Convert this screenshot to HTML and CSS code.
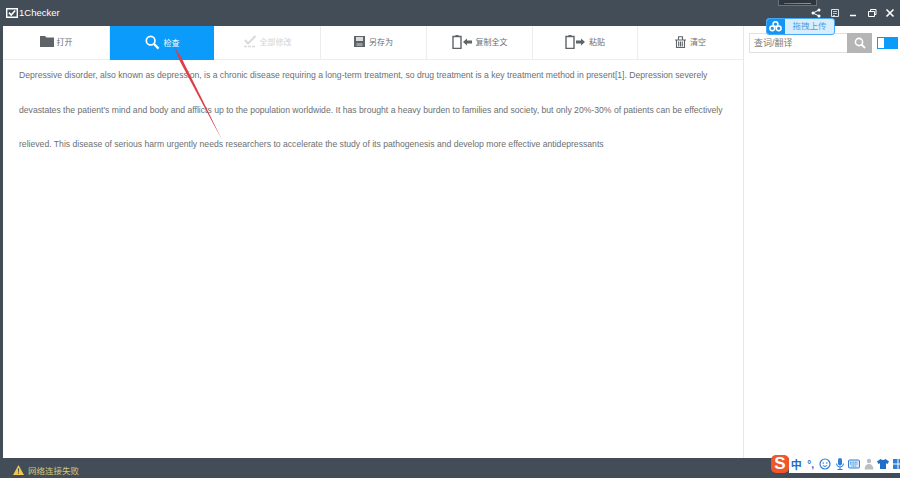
FILE: index.html
```html
<!DOCTYPE html>
<html lang="zh">
<head>
<meta charset="utf-8">
<title>1Checker</title>
<link rel="stylesheet" href="styles.css">
</head>
<body>
<div class="app">
  <header class="titlebar">
    <div class="brand">
      <svg class="brand-icon" viewBox="0 0 12 10"><path d="M.7.7h10.600v8.600H.7z" fill="none" stroke="#fff" stroke-width="1.400"/><path d="M3 4.600l2.200 2.400L9.200 2.400" fill="none" stroke="#fff" stroke-width="1.600"/></svg>
      <span>1Checker</span>
    </div>
    <div class="winbtns">
      <svg class="winbtn" viewBox="0 0 10 10"><circle cx="8" cy="2" r="1.500" fill="#fff"/><circle cx="2" cy="5" r="1.500" fill="#fff"/><circle cx="8" cy="8" r="1.500" fill="#fff"/><path d="M8 2L2 5l6 3" fill="none" stroke="#fff"/></svg>
      <svg class="winbtn" viewBox="0 0 10 10"><path d="M1.500 1.500h7v7h-7z" fill="none" stroke="#dfe2e5"/><path d="M3 3.500h4M3 5.500h4M3 7.500h2" stroke="#dfe2e5" stroke-width=".8"/></svg>
      <svg class="winbtn" viewBox="0 0 10 10"><path d="M2 7.500h6" stroke="#fff" stroke-width="1.500"/></svg>
      <svg class="winbtn" viewBox="0 0 10 10"><path d="M1.500 3.500h6v5h-6zM3.500 3.500v-2h5.500v5h-1.500" fill="none" stroke="#fff"/></svg>
      <svg class="winbtn" viewBox="0 0 10 10"><path d="M1.500 1.500l7 7M8.500 1.500l-7 7" stroke="#fff" stroke-width="1.600"/></svg>
    </div>
  </header>
  <div class="body">
    <main class="editor">
      <nav class="toolbar">
        <div class="tool">
          <svg class="ico ico-folder" viewBox="0 0 14 11"><path d="M0 0h5l1.500 1.500H14V11H0z" fill="#5f6469"/></svg>
          <span>打开</span>
        </div>
        <div class="tool tool-active">
          <svg class="ico ico-search" viewBox="0 0 16 16"><circle cx="6" cy="6" r="4.600" fill="none" stroke="#fff" stroke-width="1.800"/><path d="M9.500 9.500l5 5" stroke="#fff" stroke-width="2.400"/></svg>
          <span>检查</span>
        </div>
        <div class="tool tool-disabled">
          <svg class="ico ico-fix" viewBox="0 0 14 13"><path d="M2 5l3 3.500L12.500 1" fill="none" stroke="#d9dadb" stroke-width="2"/><path d="M1 11.500h12" stroke="#d9dadb" stroke-width="1.600" stroke-dasharray="3 1"/></svg>
          <span>全部修改</span>
        </div>
        <div class="tool">
          <svg class="ico ico-save" viewBox="0 0 11 11"><path d="M0 0h11v11H0z" fill="#5f6469"/><path d="M2 1h7v4H2z" fill="#d8dadb"/><path d="M2.500 7h6v3h-6z" fill="#9a9ea1"/></svg>
          <span>另存为</span>
        </div>
        <div class="tool">
          <svg class="ico ico-clip" viewBox="0 0 21 15"><path d="M1 2.500h8v12H1z" fill="#fff" stroke="#5f6469" stroke-width="1.400"/><path d="M3.500 1h3v2h-3z" fill="#5f6469"/><path d="M11 8l4-3.500V6.500h5v3h-5v2z" fill="#5f6469"/></svg>
          <span>复制全文</span>
        </div>
        <div class="tool">
          <svg class="ico ico-clip" viewBox="0 0 21 15"><path d="M1 2.500h8v12H1z" fill="#fff" stroke="#5f6469" stroke-width="1.400"/><path d="M3.500 1h3v2h-3z" fill="#5f6469"/><path d="M20 8l-4-3.500V6.500h-5v3h5v2z" fill="#5f6469"/></svg>
          <span>粘贴</span>
        </div>
        <div class="tool">
          <svg class="ico ico-trash" viewBox="0 0 11 12"><path d="M0 4h11M1.500 4v7.500h8V4M3.700 5.500v5M5.500 5.500v5M7.300 5.500v5M3.500 3.500V.7h4v2.800" fill="none" stroke="#5f6469" stroke-width="1.100"/></svg>
          <span>清空</span>
        </div>
      </nav>
      <div class="doc">
        <p class="doc-line">Depressive disorder, also known as depression, is a chronic disease requiring a long-term treatment, so drug treatment is a key treatment method in present[1]. Depression severely</p>
        <p class="doc-line">devastates the patient's mind and body and afflicts up to the population worldwide. It has brought a heavy burden to families and society, but only 20%-30% of patients can be effectively</p>
        <p class="doc-line">relieved. This disease of serious harm urgently needs researchers to accelerate the study of its pathogenesis and develop more effective antidepressants</p>
      </div>
    </main>
    <aside class="side">
      <div class="side-top">
        <div class="searchbox">
          <span class="search-text">查词/翻译</span>
          <span class="search-btn">
            <svg class="search-btn-ico" viewBox="0 0 12 12"><circle cx="5" cy="5" r="3.600" fill="none" stroke="#fff" stroke-width="1.600"/><path d="M7.500 7.500l3.500 3.500" stroke="#fff" stroke-width="2"/></svg>
          </span>
        </div>
        <div class="toggle"><span class="toggle-knob"></span></div>
      </div>
    </aside>
  </div>
  <footer class="statusbar">
    <svg class="warn" viewBox="0 0 12 11"><path d="M6 0l6 11H0z" fill="#f2c94c"/><path d="M6 3.500v4M6 8.300v1.300" stroke="#4a4f50" stroke-width="1.200"/></svg>
    <span class="status-text">网络连接失败</span>
  </footer>
</div>

<div class="thumb"><span class="thumb-line"></span></div>

<div class="upload">
  <span class="upload-ico">
    <svg viewBox="0 0 14 12" class="upload-cloud"><circle cx="7" cy="3.500" r="2.600" fill="none" stroke="#fff" stroke-width="1.700"/><circle cx="3.500" cy="8" r="2.600" fill="none" stroke="#fff" stroke-width="1.700"/><circle cx="10.500" cy="8" r="2.600" fill="none" stroke="#fff" stroke-width="1.700"/></svg>
  </span>
  <span class="upload-text">拖拽上传</span>
</div>

<svg class="arrow" viewBox="0 0 60 100"><path d="M3 3L11 15.500 13 20 31 56 51 97 29 56 8.800 18z" fill="#dc3f4a"/></svg>

<div class="ime">
  <span class="ime-s">S</span>
  <div class="ime-items">
    <span class="ime-cell ime-zh">中</span>
    <span class="ime-cell ime-punct">°,</span>
    <span class="ime-cell"><svg class="ime-ico" viewBox="0 0 12 12"><circle cx="6" cy="6" r="5" fill="none" stroke="#2f7fd6" stroke-width="1.200"/><circle cx="4.200" cy="5" r=".8" fill="#2f7fd6"/><circle cx="7.800" cy="5" r=".8" fill="#2f7fd6"/><path d="M3.800 7.500q2.200 2 4.400 0" fill="none" stroke="#2f7fd6"/></svg></span>
    <span class="ime-cell"><svg class="ime-ico" viewBox="0 0 12 12"><rect x="4" y="0" width="4" height="7.500" rx="2" fill="#2f7fd6"/><path d="M2.500 5.500q0 3.500 3.500 3.500t3.500-3.500M6 9v2.500M3.500 11.500h5" fill="none" stroke="#2f7fd6"/></svg></span>
    <span class="ime-cell"><svg class="ime-ico" viewBox="0 0 12 12"><rect x=".5" y="2" width="11" height="8" rx="1" fill="#dcebf9" stroke="#2f7fd6"/><path d="M2 4.200h8M2 6h8M3.500 8h5" stroke="#2f7fd6" stroke-dasharray="1 .6"/></svg></span>
    <span class="ime-cell"><svg class="ime-ico" viewBox="0 0 12 12"><circle cx="6" cy="3" r="2.200" fill="#b9bec2"/><path d="M1.500 11.500q.5-5.500 4.500-5.500t4.500 5.500z" fill="#b9bec2"/></svg></span>
    <span class="ime-cell"><svg class="ime-ico" viewBox="0 0 12 12"><path d="M3.500 1L0 3.500 1.500 6l1.500-.8V11h6V5.200l1.500.8L12 3.500 8.500 1q-2.500 2-5 0z" fill="#1f6fc4"/></svg></span>
    <span class="ime-cell"><svg class="ime-ico" viewBox="0 0 12 12"><path d="M1 1h4.500v4.500H1zM6.500 1H11v4.500H6.500zM1 6.500h4.500V11H1zM6.500 6.500H11V11H6.500z" fill="#2f7fd6"/></svg></span>
  </div>
</div>
</body>
</html>
```
FILE: styles.css
```css
* { box-sizing: border-box; }
html, body { margin: 0; padding: 0; height: 100%; overflow: hidden; }
body { font-family: "Liberation Sans", "Noto Sans CJK SC", sans-serif; background: #434d57; position: relative; }

.app { display: flex; flex-direction: column; width: 900px; height: 478px; background: #434d57; }

.titlebar { display: flex; align-items: center; justify-content: space-between; height: 26px; flex: none; padding-left: 6px; }
.brand { display: flex; align-items: center; gap: 1px; color: #fff; font-size: 9.500px; margin-top: -1px; }
.brand-icon { width: 12px; height: 10px; display: block; }
.winbtns { display: flex; align-items: center; gap: 8.500px; padding-right: 5px; margin-top: -1px; }
.winbtn { width: 10px; height: 10px; display: block; }

.body { display: flex; flex: 1; min-height: 0; margin-left: 3px; background: #fff; }
.editor { width: 741px; flex: none; display: flex; flex-direction: column; border-right: 1px solid #e6e8ea; }

.toolbar { display: grid; grid-template-columns: 107px 104px 107px 106px 106px 105px 1fr; height: 34px; flex: none; border-bottom: 1px solid #eceded; }
.tool { display: flex; align-items: center; justify-content: center; gap: 3px; padding-bottom: 2px; font-size: 8px; color: #6a6e72; border-right: 1px solid #eceded; }
.tool:last-child { border-right: 0; }
.tool-active { background: #0a9bfb; color: #fff; border-right: 0; margin-bottom: -1px; }
.tool-disabled { color: #d2d3d4; }
.ico { display: block; flex: none; }
.ico-folder { width: 14px; height: 11px; }
.ico-search { width: 15px; height: 15px; margin-right: 1px; }
.ico-fix { width: 14px; height: 13px; }
.ico-save { width: 11px; height: 11px; margin-right: 1px; }
.ico-clip { width: 21px; height: 15px; }
.ico-trash { width: 11px; height: 12px; margin-right: 1px; }

.doc { padding: 8px 16px 0; }
.doc-line { margin: 0; height: 34.500px; line-height: 14px; font-size: 8.630px; color: #6c6f72; white-space: nowrap; }

.side { flex: 1; min-width: 0; }
.side-top { display: flex; align-items: center; height: 34px; padding-left: 5px; gap: 5px; }
.searchbox { display: flex; width: 123px; height: 20px; border: 1px solid #e0e1e2; border-right: 0; background: #fff; align-items: stretch; }
.search-text { flex: 1; font-size: 9px; line-height: 18px; color: #7b7e81; padding-left: 4px; }
.search-btn { width: 25px; margin: -1px 0; background: #b5b5b5; display: flex; align-items: center; justify-content: center; }
.search-btn-ico { width: 12px; height: 12px; display: block; }
.toggle { width: 21px; height: 12px; border: 1px solid #0a9bfb; background: #fff; display: flex; justify-content: flex-end; }
.toggle-knob { width: 13px; background: #0a9bfb; }

.statusbar { height: 20px; flex: none; display: flex; align-items: center; padding-left: 13px; gap: 4px; padding-top: 3px; }
.warn { width: 11px; height: 10px; display: block; }
.status-text { font-size: 8.500px; color: #d9c677; }

.thumb { position: absolute; left: 778px; top: -2px; width: 39px; height: 8px; background: #2f363d; border: 1px solid #6a737b; display: flex; align-items: flex-end; padding: 0 5px 1px; }
.thumb-line { flex: 1; height: 1px; background: linear-gradient(90deg, #2f8a7a, #5ba25f, #9a9a60); }

.upload { position: absolute; left: 766px; top: 18px; display: flex; height: 17px; width: 69px; border-radius: 3px; overflow: hidden; border: 1px solid #46a8f6; background: #d9eefc; }
.upload-ico { width: 19px; background: #1295f5; display: flex; align-items: center; justify-content: center; margin: -1px 0 -1px -1px; }
.upload-cloud { width: 13px; height: 11px; display: block; }
.upload-text { flex: 1; text-align: center; font-size: 8.500px; line-height: 15px; color: #4aa0e6; }

.arrow { position: absolute; left: 171px; top: 43px; width: 60px; height: 100px; }

.ime { position: absolute; left: 771px; top: 455px; width: 129px; height: 18px; display: flex; align-items: stretch; }
.ime-s { width: 18px; flex: none; background: #f0562a; color: #fff; font-size: 17px; font-weight: 700; line-height: 18px; text-align: center; border-radius: 5px; }
.ime-items { flex: 1; display: flex; background: #fff; }
.ime-cell { width: 14.500px; flex: none; display: flex; align-items: center; justify-content: center; }
.ime-zh { font-size: 11px; font-weight: 700; color: #1f6fc4; }
.ime-punct { font-size: 10px; font-weight: 700; color: #1f6fc4; }
.ime-ico { width: 12px; height: 12px; display: block; }
```
